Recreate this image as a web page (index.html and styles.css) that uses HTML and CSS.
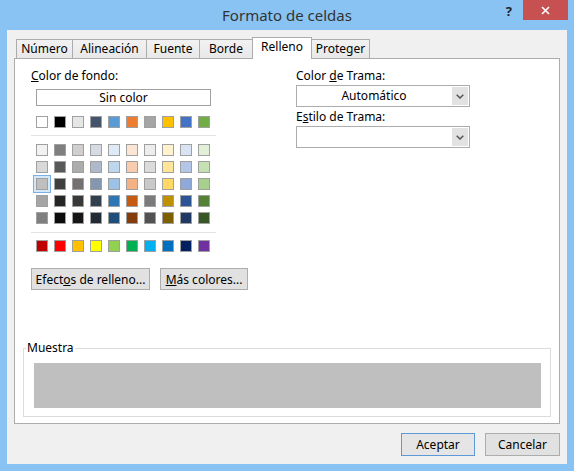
FILE: index.html
```html
<!DOCTYPE html>
<html lang="es">
<head>
  <meta charset="UTF-8">
  <title>Formato de celdas</title>
  <link rel="stylesheet" href="styles.css">
</head>
<body>
  <div class="window">
    <div class="titlebar">
      <span class="title">Formato de celdas</span>
      <div class="controls">
        <span class="help">?</span>
        <span class="close">
          <svg width="9" height="9" viewBox="0 0 9 9"><path d="M1 1L8 8M8 1L1 8" stroke="#fff" stroke-width="1.6"/></svg>
        </span>
      </div>
    </div>

    <div class="client">
      <div class="tabs">
        <span class="tab t-numero">Número</span>
        <span class="tab t-alineacion">Alineación</span>
        <span class="tab t-fuente">Fuente</span>
        <span class="tab t-borde">Borde</span>
        <span class="tab t-relleno active">Relleno</span>
        <span class="tab t-proteger">Proteger</span>
      </div>

      <div class="panel">
        <div class="columns">
          <div class="left">
            <div class="label"><u>C</u>olor de fondo:</div>
            <div class="no-color">Sin color</div>

            <div class="swatches theme">
              <span class="swatch" style="background:#ffffff"></span>
              <span class="swatch" style="background:#000000"></span>
              <span class="swatch" style="background:#e7e6e6"></span>
              <span class="swatch" style="background:#44546a"></span>
              <span class="swatch" style="background:#5b9bd5"></span>
              <span class="swatch" style="background:#ed7d31"></span>
              <span class="swatch" style="background:#a5a5a5"></span>
              <span class="swatch" style="background:#ffc000"></span>
              <span class="swatch" style="background:#4472c4"></span>
              <span class="swatch" style="background:#70ad47"></span>
            </div>
            <hr>
            <div class="swatches tints">
              <span class="swatch" style="background:#f2f2f2"></span>
              <span class="swatch" style="background:#7f7f7f"></span>
              <span class="swatch" style="background:#d0cece"></span>
              <span class="swatch" style="background:#d6dce4"></span>
              <span class="swatch" style="background:#deebf6"></span>
              <span class="swatch" style="background:#fbe5d5"></span>
              <span class="swatch" style="background:#ededed"></span>
              <span class="swatch" style="background:#fff2cc"></span>
              <span class="swatch" style="background:#dae3f3"></span>
              <span class="swatch" style="background:#e2efd9"></span>

              <span class="swatch" style="background:#d8d8d8"></span>
              <span class="swatch" style="background:#595959"></span>
              <span class="swatch" style="background:#aeabab"></span>
              <span class="swatch" style="background:#adb9ca"></span>
              <span class="swatch" style="background:#bdd7ee"></span>
              <span class="swatch" style="background:#f7cbac"></span>
              <span class="swatch" style="background:#dbdbdb"></span>
              <span class="swatch" style="background:#fee599"></span>
              <span class="swatch" style="background:#b4c6e7"></span>
              <span class="swatch" style="background:#c5e0b3"></span>

              <span class="swatch selected" style="background:#bfbfbf"></span>
              <span class="swatch" style="background:#3f3f3f"></span>
              <span class="swatch" style="background:#757070"></span>
              <span class="swatch" style="background:#8496b0"></span>
              <span class="swatch" style="background:#9cc3e5"></span>
              <span class="swatch" style="background:#f4b183"></span>
              <span class="swatch" style="background:#c9c9c9"></span>
              <span class="swatch" style="background:#ffd965"></span>
              <span class="swatch" style="background:#8eaadb"></span>
              <span class="swatch" style="background:#a8d08d"></span>

              <span class="swatch" style="background:#a5a5a5"></span>
              <span class="swatch" style="background:#262626"></span>
              <span class="swatch" style="background:#3a3838"></span>
              <span class="swatch" style="background:#323f4f"></span>
              <span class="swatch" style="background:#2e75b5"></span>
              <span class="swatch" style="background:#c55a11"></span>
              <span class="swatch" style="background:#7b7b7b"></span>
              <span class="swatch" style="background:#bf9000"></span>
              <span class="swatch" style="background:#2f5496"></span>
              <span class="swatch" style="background:#538135"></span>

              <span class="swatch" style="background:#7f7f7f"></span>
              <span class="swatch" style="background:#0c0c0c"></span>
              <span class="swatch" style="background:#171616"></span>
              <span class="swatch" style="background:#222a35"></span>
              <span class="swatch" style="background:#1e4e79"></span>
              <span class="swatch" style="background:#843c0b"></span>
              <span class="swatch" style="background:#525252"></span>
              <span class="swatch" style="background:#7f6000"></span>
              <span class="swatch" style="background:#1f3864"></span>
              <span class="swatch" style="background:#375623"></span>
            </div>
            <hr class="sep-standard">
            <div class="swatches standard">
              <span class="swatch" style="background:#c00000"></span>
              <span class="swatch" style="background:#ff0000"></span>
              <span class="swatch" style="background:#ffc000"></span>
              <span class="swatch" style="background:#ffff00"></span>
              <span class="swatch" style="background:#92d050"></span>
              <span class="swatch" style="background:#00b050"></span>
              <span class="swatch" style="background:#00b0f0"></span>
              <span class="swatch" style="background:#0070c0"></span>
              <span class="swatch" style="background:#002060"></span>
              <span class="swatch" style="background:#7030a0"></span>
            </div>

            <div class="actions">
              <button class="btn btn-effects">Efect<u>o</u>s de relleno...</button>
              <button class="btn btn-more"><u>M</u>ás colores...</button>
            </div>
          </div>

          <div class="right">
            <div class="label">Color <u>d</u>e Trama:</div>
            <div class="select">
              <span class="select-value">Automático</span>
              <span class="select-arrow">
                <svg width="8" height="5" viewBox="0 0 8 5"><path d="M0.7 0.7L4 4L7.3 0.7" fill="none" stroke="#555" stroke-width="1.5"/></svg>
              </span>
            </div>
            <div class="label label-style">E<u>s</u>tilo de Trama:</div>
            <div class="select">
              <span class="select-value"></span>
              <span class="select-arrow">
                <svg width="8" height="5" viewBox="0 0 8 5"><path d="M0.7 0.7L4 4L7.3 0.7" fill="none" stroke="#555" stroke-width="1.5"/></svg>
              </span>
            </div>
          </div>
        </div>

        <fieldset class="sample">
          <legend>Muestra</legend>
          <div class="sample-fill"></div>
        </fieldset>
      </div>

      <div class="footer">
        <button class="btn btn-ok">Aceptar</button>
        <button class="btn btn-cancel">Cancelar</button>
      </div>
    </div>
  </div>
</body>
</html>
```

FILE: styles.css
```css
body {
  margin: 0;
  font-family: "Segoe UI", "Noto Sans", sans-serif;
  font-size: 12px;
  color: #000;
}
.window {
  width: 574px;
  height: 471px;
  background: #89c3f3;
  display: flex;
  flex-direction: column;
}
.titlebar {
  height: 30px;
  flex: none;
  display: grid;
  grid-template-columns: 1fr auto 1fr;
  align-items: start;
}
.title {
  grid-column: 2;
  font-size: 15px;
  line-height: 30px;
  color: #333;
}
.controls {
  justify-self: end;
  display: flex;
  align-items: flex-start;
  margin-right: 6px;
}
.help {
  font-size: 13px;
  font-weight: bold;
  line-height: 16px;
  color: #222;
  margin: 3px 11px 0 0;
}
.close {
  width: 45px;
  height: 20px;
  background: #c75050;
  display: flex;
  align-items: center;
  justify-content: center;
}
.client {
  flex: 1;
  margin: 0 7px 7px;
  background: #f0f0f0;
  padding: 7px 7px 0;
  display: flex;
  flex-direction: column;
}

/* tabs */
.tabs {
  display: flex;
  align-items: flex-end;
  height: 21px;
  padding-left: 2px;
}
.tab {
  box-sizing: border-box;
  height: 19px;
  border: 1px solid #acacac;
  border-bottom: none;
  background: linear-gradient(#f2f2f2, #e8e8e8);
  text-align: center;
  line-height: 18px;
}
.tab + .tab {
  margin-left: -1px;
}
.tab.active {
  height: 22px;
  margin-bottom: -1px;
  background: #fff;
  line-height: 17px;
  position: relative;
  z-index: 1;
}
.t-numero { width: 57px; }
.t-alineacion { width: 75px; }
.t-fuente { width: 54px; }
.t-borde { width: 54px; }
.t-relleno { width: 60px; }
.t-proteger { width: 59px; }

.panel {
  height: 366px;
  box-sizing: border-box;
  border: 1px solid #acacac;
  background: #fff;
  padding: 9px 8px 6px 8px;
  display: flex;
  flex-direction: column;
}
.columns {
  display: flex;
  padding-left: 8px;
}
.left {
  width: 185px;
}
.right {
  width: 174px;
  margin-left: 80px;
}
.label {
  line-height: 16px;
}
.no-color {
  box-sizing: border-box;
  width: 175px;
  height: 17px;
  margin: 5px 0 0 5px;
  border: 1px solid #a0a0a0;
  text-align: center;
  line-height: 15px;
}

/* colour grid */
.swatches {
  display: grid;
  grid-template-columns: repeat(10, 12px);
  grid-auto-rows: 12px;
  gap: 5px 6px;
  margin-left: 5px;
}
.swatches.theme {
  margin-top: 10px;
}
.swatch {
  box-sizing: border-box;
  border: 1px solid #a0a0a0;
}
.swatch.selected {
  box-shadow: 0 0 0 2px #d5e8f8, 0 0 0 3px #7cb0e3;
}
hr {
  border: 0;
  border-top: 1px solid #e2e2e2;
  margin: 7px 0 8px;
}
hr.sep-standard {
  margin: 8px 0 7px;
}

.btn {
  box-sizing: border-box;
  flex: none;
  height: 22px;
  padding: 0;
  font: inherit;
  white-space: nowrap;
  color: #000;
  background: #e1e1e1;
  border: 1px solid #adadad;
}
.actions {
  display: flex;
  gap: 10px;
  margin-top: 16px;
}
.btn-effects { width: 119px; }
.btn-more { width: 88px; }

/* dropdowns */
.select {
  box-sizing: border-box;
  display: flex;
  height: 22px;
  margin-top: 1px;
  border: 1px solid #acacac;
  background: #fff;
}
.select-value {
  flex: 1;
  text-align: center;
  line-height: 20px;
}
.select-arrow {
  width: 16px;
  margin: 1px;
  background: #e2e2e2;
  display: flex;
  align-items: center;
  justify-content: center;
}
.label-style {
  margin-top: 2px;
}

/* sample */
.sample {
  margin: auto 0 0;
  padding: 8px 9px 8px 10px;
  border: 1px solid #dcdcdc;
  min-width: 0;
}
.sample legend {
  padding: 0 1px;
  margin-left: -8px;
  line-height: 14px;
}
.sample-fill {
  height: 45px;
  background: #bfbfbf;
}

.footer {
  display: flex;
  justify-content: flex-end;
  gap: 10px;
  margin-top: 9px;
}
.btn-ok {
  width: 74px;
  height: 23px;
  border-color: #5e9ad8;
  background: #e5e5e5;
}
.btn-cancel {
  width: 75px;
  height: 23px;
}
```
